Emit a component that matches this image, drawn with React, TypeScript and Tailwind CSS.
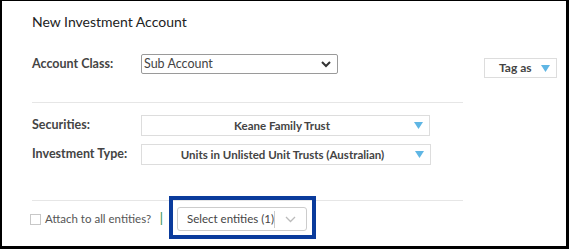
import React from "react";

const Tri = () => (
  <svg width="9" height="7" viewBox="0 0 9 7" className="shrink-0">
    <path d="M0 0 L9 0 L4.5 7 Z" fill="#5fb6e4" />
  </svg>
);

export default function App() {
  const font = { fontFamily: 'Lato, "Liberation Sans", sans-serif' };
  return (
    <div
      className="relative w-[569px] h-[249px] bg-white border-t-[1px] border-l-[2px] border-r-[3px] border-b-[3px] border-black text-[#333] overflow-hidden"
      style={font}
    >
      <div className="pl-[30px] pt-[12px]">
        <div className="text-[14px] leading-[18px] text-[#222]">New Investment Account</div>

        <div className="flex items-start mt-[23px] pr-[9px]">
          <div className="w-[109px] text-[12.5px] font-bold leading-[20px] text-[#444]">Account Class:</div>
          <div className="w-[197px] h-[20px] border border-[#9a9a9a] rounded-[2px] flex items-center pl-[2px] pr-[6px] text-[12.5px] text-[#444]">
            <span className="flex-1">Sub Account</span>
            <svg width="10" height="7" viewBox="0 0 10 7">
              <path d="M1 1 L5 5 L9 1" stroke="#333" strokeWidth="2" fill="none" />
            </svg>
          </div>
          <div className="ml-auto mt-[4px] w-[73px] h-[20px] border border-[#ddd] flex items-center pl-[14px] pr-[6px] text-[12px] font-bold text-[#444]">
            <span className="flex-1">Tag as</span>
            <Tri />
          </div>
        </div>

        <div className="w-[431px] h-px bg-[#e6e6e6] mt-[24px]" />

        <div className="flex flex-col gap-[8px] mt-[12px]">
          <div className="flex items-center">
            <div className="w-[109px] text-[12.5px] font-bold text-[#444]">Securities:</div>
            <div className="w-[289px] h-[21px] border border-[#ddd] flex items-center pr-[6px] text-[11.5px] font-bold text-[#444]">
              <span className="flex-1 text-center pl-[8px]">Keane Family Trust</span>
              <Tri />
            </div>
          </div>
          <div className="flex items-center">
            <div className="w-[109px] text-[12.5px] font-bold text-[#444]">Investment Type:</div>
            <div className="w-[290px] h-[21px] border border-[#ddd] flex items-center pr-[6px] text-[11.5px] font-bold text-[#444]">
              <span className="flex-1 text-center pl-[8px]">Units in Unlisted Unit Trusts (Australian)</span>
              <Tri />
            </div>
          </div>
        </div>

        <div className="w-[431px] h-px bg-[#e6e6e6] mt-[35px]" />

        <div className="flex items-center mt-[6px] -ml-[2px]">
          <div className="w-[11px] h-[11px] shrink-0 border border-[#c8c8c8] bg-white" />
          <span className="ml-[4px] w-[114px] shrink-0 whitespace-nowrap text-[11.5px] text-[#555]">Attach to all entities?</span>
          <span className="w-[5px] shrink-0 text-center text-[13px] text-[#2e8b3a]">|</span>
          <div className="ml-[13px] w-[130px] h-[24px] shrink-0 border border-[#ccc] rounded-[3px] flex items-center">
            <span className="pl-[9px] whitespace-nowrap text-[11.5px] text-[#444] w-[96px]">Select entities (1)</span>
            <div className="w-px h-[17px] bg-[#ccc]" />
            <div className="flex-1 flex justify-center">
              <svg width="11" height="7" viewBox="0 0 11 7">
                <path d="M1 1 L5.5 5.5 L10 1" stroke="#bbb" strokeWidth="1.3" fill="none" />
              </svg>
            </div>
          </div>
        </div>
      </div>

      <div className="absolute left-[167px] top-[195px] w-[147px] h-[43px] border-[4px] border-[#0a3b9c]" />
    </div>
  );
}
